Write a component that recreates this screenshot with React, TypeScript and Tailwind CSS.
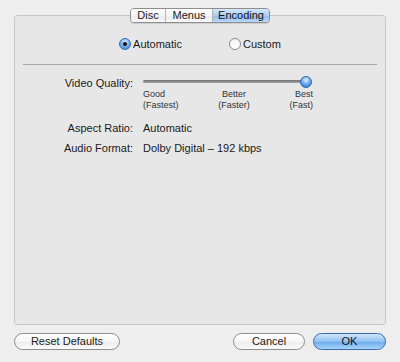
import React from "react";

const font = "font-['Liberation_Sans','Helvetica',sans-serif]";

const Tab: React.FC<{ label: string; active?: boolean; last?: boolean; className?: string }> = ({ label, active, last, className }) => (
  <div
    className={`h-full flex items-center justify-center ${last ? "" : "border-r border-[#b4b4b4]"} ${
      active
        ? "bg-[linear-gradient(#d6e8fb,#a9cdf3_50%,#8fbdee_51%,#b8d8f8)] text-[#111]"
        : "bg-[linear-gradient(#ffffff,#f4f4f4_50%,#e9e9e9_51%,#fafafa)] text-[#222]"
    } ${className ?? ""}`}
  >
    {label}
  </div>
);

const Radio: React.FC<{ label: string; checked?: boolean }> = ({ label, checked }) => (
  <label className="flex items-center gap-[2px]">
    {checked ? (
      <span className="w-[12px] h-[12px] rounded-full border border-[#3a6fb0] bg-[radial-gradient(circle_at_50%_30%,#d8ecff,#6aa8ea_55%,#3b7fd6)] flex items-center justify-center">
        <span className="w-[4px] h-[4px] rounded-full bg-[#111]" />
      </span>
    ) : (
      <span className="w-[12px] h-[12px] rounded-full border border-[#8a8a8a] bg-[linear-gradient(#f4f4f4,#ffffff)]" />
    )}
    <span>{label}</span>
  </label>
);

const Button: React.FC<{ label: string; primary?: boolean; className?: string }> = ({ label, primary, className }) => (
  <button
    className={`h-[17px] rounded-full border text-[11px] leading-none flex items-center justify-center ${
      primary
        ? "border-[#3b6aa8] bg-[linear-gradient(#d3e6fa,#8fc0f2_50%,#6aa9ec_51%,#a9d5fb)] text-[#111]"
        : "border-[#8d8d8d] bg-[linear-gradient(#ffffff,#f6f6f6_50%,#ebebeb_51%,#fbfbfb)] text-[#222]"
    } ${className ?? ""}`}
  >
    {label}
  </button>
);

export default function App() {
  return (
    <div className={`w-[400px] h-[362px] bg-[#eeeeee] ${font} text-[11px] text-[#1a1a1a] flex flex-col px-[14px] pt-[8px]`}>
      <div className="flex justify-center relative z-10">
        <div className="h-[15px] flex rounded-[4px] border border-[#8e8e8e] overflow-hidden text-[11px] leading-none shadow-[0_1px_1px_rgba(0,0,0,0.12)]">
          <Tab label="Disc" className="w-[35px]" />
          <Tab label="Menus" className="w-[47px]" />
          <Tab label="Encoding" active last className="w-[56px]" />
        </div>
      </div>
      <div className="-mt-[8px] h-[310px] border border-[#c7c7c7] rounded-[3px] bg-[#e7e7e7] flex flex-col px-[8px]">
        <div className="flex justify-center gap-[47px] pt-[20px]">
          <Radio label="Automatic" checked />
          <Radio label="Custom" />
        </div>
        <div className="mt-[11px] h-px bg-[#a9a9a9]" />
        <div className="grid grid-cols-[110px_170px] gap-x-[10px] mt-[11px] items-start">
          <div className="text-right leading-[14px]">Video Quality:</div>
          <div className="flex flex-col">
            <div className="relative h-[12px] flex items-center">
              <div className="w-[167px] h-[3px] rounded-full bg-[linear-gradient(#6f6f6f,#a8a8a8)]" />
              <div className="absolute left-[157px] top-0 w-[12px] h-[12px] rounded-full border border-[#2f64b0] bg-[radial-gradient(circle_at_50%_30%,#e2f1ff,#5ea0ea_55%,#2a6fd0)]" />
            </div>
            <div className="flex justify-between text-[9px] leading-[11px] text-[#333] mt-[1px]">
              <div>
                Good
                <br />
                (Fastest)
              </div>
              <div className="text-center">
                Better
                <br />
                (Faster)
              </div>
              <div className="text-right">
                Best
                <br />
                (Fast)
              </div>
            </div>
          </div>
          <div className="text-right mt-[10px] leading-[14px]">Aspect Ratio:</div>
          <div className="mt-[10px] leading-[14px]">Automatic</div>
          <div className="text-right mt-[6px] leading-[14px]">Audio Format:</div>
          <div className="mt-[6px] leading-[14px]">Dolby Digital – 192 kbps</div>
        </div>
      </div>
      <div className="flex items-center mt-[8px]">
        <Button label="Reset Defaults" className="w-[106px]" />
        <div className="flex-1" />
        <Button label="Cancel" className="w-[72px]" />
        <Button label="OK" primary className="w-[73px] ml-[8px]" />
      </div>
    </div>
  );
}
